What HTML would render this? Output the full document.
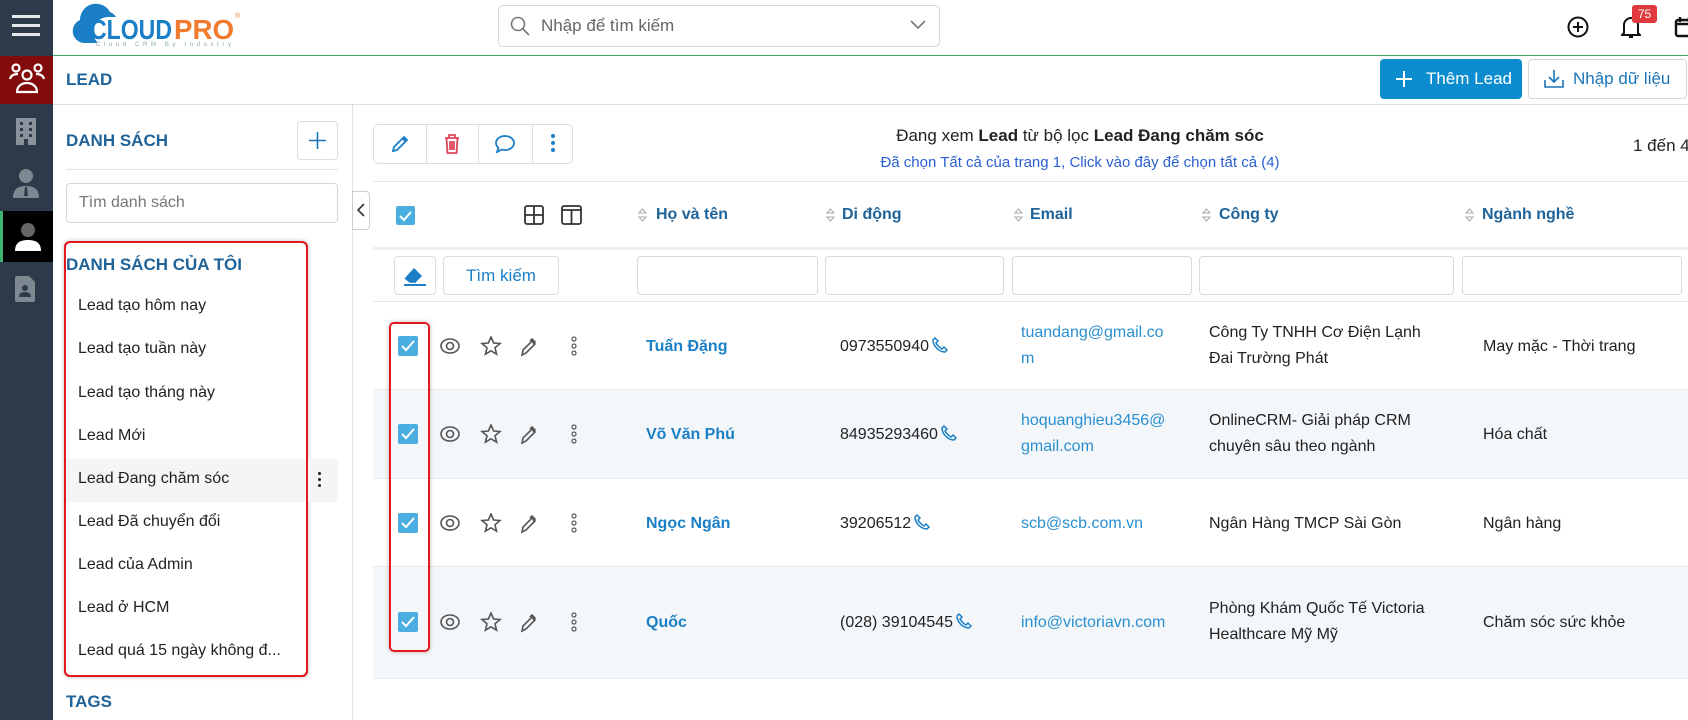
<!DOCTYPE html>
<html><head><meta charset="utf-8">
<style>
*{box-sizing:border-box;margin:0;padding:0}
body{width:1688px;height:720px;overflow:hidden;background:#fff;font-family:"Liberation Sans",Arial,sans-serif;position:relative;color:#222}
.a{position:absolute}
.side{left:0;top:0;width:53px;height:720px;background:#2c3a4a}
.item{position:absolute;left:78px;font-size:16px;color:#222}
.th{position:absolute;top:206px;font-size:16px;font-weight:bold;color:#1f6399}
.sort{position:absolute;top:207px;width:9px;height:16px}
.inp{position:absolute;top:256px;height:39px;border:1px solid #d9d9d9;border-radius:4px;background:#fff}
.cell{position:absolute;font-size:16px;line-height:26px}
.row{position:absolute;left:373px;width:1315px;border-bottom:1px solid #e8ecef}
.ph{display:inline-block;vertical-align:-2px;margin-left:3px}
</style></head><body>
<div class="a side"></div>
<div class="a" style="left:12px;top:15px;width:28px;height:3px;background:#e6e9ec;box-shadow:0 9px 0 #e6e9ec,0 18px 0 #e6e9ec"></div>
<div class="a" style="left:0;top:56px;width:53px;height:48px;background:#820b0b"></div>
<svg class="a" style="left:8px;top:62px" width="38" height="34" viewBox="0 0 38 34" fill="none" stroke="#fff" stroke-width="2.2"><circle cx="8" cy="6" r="3.5"/><circle cx="30" cy="6" r="3.5"/><circle cx="19" cy="13" r="4.5"/><path d="M2 17c1-4 4-5 8-5M36 17c-1-4-4-5-8-5M9 30c0-6 5-9 10-9s10 3 10 9z"/></svg>
<svg class="a" style="left:15px;top:117px" width="22" height="28" viewBox="0 0 22 28"><rect x="1" y="1" width="20" height="27" fill="#8a939c"/><g fill="#2c3a4a"><rect x="5" y="5" width="3" height="3"/><rect x="14" y="5" width="3" height="3"/><rect x="5" y="11" width="3" height="3"/><rect x="14" y="11" width="3" height="3"/><rect x="5" y="17" width="3" height="3"/><rect x="14" y="17" width="3" height="3"/><rect x="9" y="22" width="4" height="6"/></g></svg>
<svg class="a" style="left:13px;top:168px" width="26" height="30" viewBox="0 0 26 30"><circle cx="13" cy="8" r="7" fill="#7e8891"/><path d="M0 30c0-9 5-12 13-12s13 3 13 12z" fill="#7e8891"/><path d="M12 19h2l1 9h-4z" fill="#2c3a4a"/></svg>
<div class="a" style="left:0;top:211px;width:53px;height:51px;background:#000;border-left:3px solid #3cb371"></div>
<svg class="a" style="left:15px;top:222px" width="26" height="30" viewBox="0 0 26 30"><circle cx="13" cy="8" r="7" fill="#666"/><path d="M0 29c0-8 5-11 13-11s13 3 13 11z" fill="#fff"/></svg>
<svg class="a" style="left:15px;top:276px" width="20" height="26" viewBox="0 0 20 26"><path d="M0 2q0-2 2-2h12l6 6v18q0 2-2 2H2q-2 0-2-2z" fill="#7e8891"/><circle cx="10" cy="12" r="3" fill="#2c3a4a"/><path d="M4 21c0-4 3-5 6-5s6 1 6 5z" fill="#2c3a4a"/></svg>
<div class="a" style="left:53px;top:55px;width:1635px;height:1px;background:#3ca66a"></div>
<svg class="a" style="left:62px;top:3px" width="190" height="44" viewBox="0 0 190 44"><path d="M22 40a12 12 0 0 1-4-23a16 16 0 0 1 30-8a12 12 0 0 1 6 5h-8a15 15 0 0 0-10 26z" fill="#1a7fc6"/><text x="28" y="36" font-family="Liberation Sans" font-weight="bold" font-size="28" fill="#1a7fc6" textLength="82" lengthAdjust="spacingAndGlyphs">CLOUD</text><text x="112" y="36" font-family="Liberation Sans" font-weight="bold" font-size="28" fill="#f07a2e" textLength="60" lengthAdjust="spacingAndGlyphs">PRO</text><text x="173" y="15" font-family="Liberation Sans" font-size="7" fill="#f07a2e">®</text><text x="34" y="43" font-family="Liberation Sans" font-size="6" fill="#8aa" textLength="135" lengthAdjust="spacing">Cloud CRM By Industry</text></svg>
<div class="a" style="left:498px;top:5px;width:442px;height:42px;border:1px solid #d6d6d6;border-radius:5px"></div>
<svg class="a" style="left:510px;top:16px" width="20" height="20" viewBox="0 0 20 20" fill="none" stroke="#777" stroke-width="1.6"><circle cx="8" cy="8" r="6.5"/><path d="M13 13l6 6"/></svg>
<div class="a" style="left:541px;top:16px;font-size:17px;color:#666">Nhập để tìm kiếm</div>
<svg class="a" style="left:910px;top:20px" width="16" height="10" viewBox="0 0 16 10" fill="none" stroke="#777" stroke-width="1.6"><path d="M1 1l7 7 7-7"/></svg>
<svg class="a" style="left:1567px;top:16px" width="22" height="22" viewBox="0 0 22 22" fill="none" stroke="#111" stroke-width="2"><circle cx="11" cy="11" r="9.5"/><path d="M11 6v10M6 11h10"/></svg>
<svg class="a" style="left:1621px;top:15px" width="20" height="24" viewBox="0 0 20 24" fill="none" stroke="#111" stroke-width="2"><path d="M3 18V10a7 7 0 0 1 14 0v8l2 2H1z M8 22h4"/></svg>
<div class="a" style="left:1632px;top:5px;width:25px;height:18px;background:#e0393e;border-radius:3px;color:#fff;font-size:12px;text-align:center;line-height:18px">75</div>
<svg class="a" style="left:1674px;top:16px" width="20" height="22" viewBox="0 0 20 22" fill="none" stroke="#111" stroke-width="2.4"><rect x="2" y="4" width="18" height="16" rx="2"/><path d="M2 8h18M6 1v5M15 1v5"/></svg>
<div class="a" style="left:66px;top:70px;font-size:17px;font-weight:bold;color:#1f6399">LEAD</div>
<div class="a" style="left:53px;top:104px;width:1635px;height:1px;background:#ddd"></div>
<div class="a" style="left:1380px;top:59px;width:142px;height:40px;background:#0a8ccf;border-radius:4px;color:#fff;font-size:17px;line-height:40px;padding-left:46px">Thêm Lead</div>
<svg class="a" style="left:1396px;top:71px" width="16" height="16" viewBox="0 0 16 16" stroke="#fff" stroke-width="2"><path d="M8 0v16M0 8h16"/></svg>
<div class="a" style="left:1528px;top:59px;width:159px;height:40px;border:1px solid #d6d6d6;border-radius:4px;color:#1a75b8;font-size:17px;line-height:38px;padding-left:44px">Nhập dữ liệu</div>
<svg class="a" style="left:1544px;top:69px" width="20" height="19" viewBox="0 0 20 19" fill="none" stroke="#1a75b8" stroke-width="1.6"><path d="M10 1v11M5 8l5 5 5-5M1 11v7h18v-7"/></svg>
<div class="a" style="left:352px;top:105px;width:1px;height:615px;background:#e3e3e3"></div>
<div class="a" style="left:66px;top:131px;font-size:17px;font-weight:bold;color:#1f6399">DANH SÁCH</div>
<div class="a" style="left:297px;top:121px;width:41px;height:39px;border:1px solid #ddd;border-radius:4px"></div>
<svg class="a" style="left:309px;top:132px" width="17" height="17" viewBox="0 0 17 17" stroke="#1a75b8" stroke-width="1.6"><path d="M8.5 0v17M0 8.5h17"/></svg>
<div class="a" style="left:66px;top:169px;width:272px;height:1px;background:#e3e3e3"></div>
<div class="a" style="left:66px;top:183px;width:272px;height:40px;border:1px solid #d6d6d6;border-radius:4px;font-size:16px;color:#777;padding:10px 0 0 12px">Tìm danh sách</div>
<div class="a" style="left:64px;top:241px;width:244px;height:436px;border:2px solid #e3191f;border-radius:6px;box-shadow:0 0 5px rgba(0,0,0,.25)"></div>
<div class="a" style="left:66px;top:255px;font-size:17px;font-weight:bold;color:#1f6399">DANH SÁCH CỦA TÔI</div>
<div class="a" style="left:66px;top:459px;width:272px;height:43px;background:#f5f5f5"></div>
<div class="a" style="left:64px;top:241px;width:244px;height:436px;border:2px solid #e3191f;border-radius:6px"></div>
<div class="item" style="top:297px">Lead tạo hôm nay</div>
<div class="item" style="top:340px">Lead tạo tuần này</div>
<div class="item" style="top:384px">Lead tạo tháng này</div>
<div class="item" style="top:427px">Lead Mới</div>
<div class="item" style="top:470px">Lead Đang chăm sóc</div>
<div class="item" style="top:513px">Lead Đã chuyển đổi</div>
<div class="item" style="top:556px">Lead của Admin</div>
<div class="item" style="top:599px">Lead ở HCM</div>
<div class="item" style="top:642px">Lead quá 15 ngày không đ...</div>
<div class="a" style="left:318px;top:472px;width:3px;height:3px;background:#222;border-radius:50%;box-shadow:0 6px 0 #222,0 12px 0 #222"></div>
<div class="a" style="left:66px;top:692px;font-size:17px;font-weight:bold;color:#1f6399">TAGS</div>
<div class="a" style="left:352px;top:191px;width:18px;height:39px;border:1px solid #ccc;border-radius:0 4px 4px 0;background:#fff"></div>
<svg class="a" style="left:356px;top:203px" width="10" height="14" viewBox="0 0 10 14" fill="none" stroke="#333" stroke-width="1.6"><path d="M8 1L2 7l6 6"/></svg>
<div class="a" style="left:373px;top:124px;width:200px;height:40px;border:1px solid #ddd;border-radius:5px"></div>
<div class="a" style="left:426px;top:125px;width:1px;height:38px;background:#ddd"></div>
<div class="a" style="left:478px;top:125px;width:1px;height:38px;background:#ddd"></div>
<div class="a" style="left:532px;top:125px;width:1px;height:38px;background:#ddd"></div>
<svg class="a" style="left:391px;top:135px" width="18" height="18" viewBox="0 0 18 18" fill="none" stroke="#1a7fc6" stroke-width="1.8"><path d="M2 16l1-4 10-10 3 3-10 10z"/><path d="M12 3l3 3" stroke-width="3"/></svg>
<svg class="a" style="left:444px;top:134px" width="16" height="20" viewBox="0 0 16 20" fill="none" stroke="#e0455a" stroke-width="1.8"><path d="M1 4h14M5 4V1h6v3M2.5 4l1 15h9l1-15M6 7v9M8 7v9M10 7v9"/></svg>
<svg class="a" style="left:495px;top:135px" width="20" height="18" viewBox="0 0 20 18" fill="none" stroke="#1a7fc6" stroke-width="1.8"><path d="M10 1c5 0 9 3 9 7s-4 7-9 7c-1 0-2 0-3-.5L2 17l1.5-4C2 11.5 1 10 1 8c0-4 4-7 9-7z"/></svg>
<div class="a" style="left:551px;top:134px;width:4px;height:4px;border-radius:50%;background:#1a7fc6;box-shadow:0 7px 0 #1a7fc6,0 14px 0 #1a7fc6"></div>
<div class="a" style="left:700px;top:126px;width:760px;text-align:center;font-size:17px;color:#222">Đang xem <b>Lead</b> từ bộ lọc <b>Lead Đang chăm sóc</b></div>
<div class="a" style="left:700px;top:154px;width:760px;text-align:center;font-size:15px;color:#2a5fd0">Đã chọn Tất cả của trang 1, Click vào đây để chọn tất cả (4)</div>
<div class="a" style="left:1633px;top:136px;font-size:17px;color:#222;white-space:nowrap">1 đến 4</div>
<div class="a" style="left:373px;top:181px;width:1315px;height:1px;background:#e8e8e8"></div>
<svg class="a" style="left:396px;top:206px" width="19" height="19" viewBox="0 0 19 19"><rect width="19" height="19" rx="2" fill="#4aaee0"/><path d="M4 10l4 4 7-8" fill="none" stroke="#fff" stroke-width="2"/></svg>
<svg class="a" style="left:524px;top:205px" width="58" height="20" viewBox="0 0 58 20" fill="none" stroke="#333" stroke-width="1.8"><rect x="1" y="1" width="18" height="18" rx="2"/><path d="M10 1v18M1 10h18"/><rect x="38" y="1" width="19" height="18" rx="2"/><path d="M38 5h19M47.5 5v14"/></svg>
<svg class="sort" style="left:638px" viewBox="0 0 9 16" fill="none" stroke="#aaa"><path d="M1 6l3.5-4 3.5 4zM1 10l3.5 4 3.5-4z"/></svg><div class="th" style="left:656px">Họ và tên</div>
<svg class="sort" style="left:826px" viewBox="0 0 9 16" fill="none" stroke="#aaa"><path d="M1 6l3.5-4 3.5 4zM1 10l3.5 4 3.5-4z"/></svg><div class="th" style="left:842px">Di động</div>
<svg class="sort" style="left:1014px" viewBox="0 0 9 16" fill="none" stroke="#aaa"><path d="M1 6l3.5-4 3.5 4zM1 10l3.5 4 3.5-4z"/></svg><div class="th" style="left:1030px">Email</div>
<svg class="sort" style="left:1202px" viewBox="0 0 9 16" fill="none" stroke="#aaa"><path d="M1 6l3.5-4 3.5 4zM1 10l3.5 4 3.5-4z"/></svg><div class="th" style="left:1219px">Công ty</div>
<svg class="sort" style="left:1465px" viewBox="0 0 9 16" fill="none" stroke="#aaa"><path d="M1 6l3.5-4 3.5 4zM1 10l3.5 4 3.5-4z"/></svg><div class="th" style="left:1482px">Ngành nghề</div>
<div class="a" style="left:373px;top:247px;width:1315px;height:3px;background:#eceeef"></div>
<div class="a" style="left:394px;top:256px;width:42px;height:39px;border:1px solid #ddd;border-radius:4px"></div>
<svg class="a" style="left:402px;top:264px" width="26" height="22" viewBox="0 0 26 22"><path d="M3 14l9-10 8 8-6 6H8z" fill="#1a7fc6"/><path d="M3 14l5 4h6" fill="none" stroke="#1a7fc6" stroke-width="1.6"/><path d="M2 21h22" stroke="#1a7fc6" stroke-width="2"/></svg>
<div class="a" style="left:443px;top:256px;width:116px;height:39px;border:1px solid #ddd;border-radius:4px;text-align:center;line-height:37px;font-size:17px;color:#1a7fc6">Tìm kiếm</div>
<div class="inp" style="left:637px;width:181px"></div>
<div class="inp" style="left:825px;width:179px"></div>
<div class="inp" style="left:1012px;width:180px"></div>
<div class="inp" style="left:1199px;width:255px"></div>
<div class="inp" style="left:1462px;width:220px"></div>
<div class="a" style="left:373px;top:301px;width:1315px;height:1px;background:#e8e8e8"></div>
<div class="row" style="top:302px;height:88px;background:#fff"></div>
<div class="row" style="top:390px;height:89px;background:#f4f7fa"></div>
<div class="row" style="top:479px;height:88px;background:#fff"></div>
<div class="row" style="top:567px;height:112px;background:#f4f7fa"></div>
<svg class="a" style="left:398px;top:336px" width="230" height="22" viewBox="0 0 230 22"><rect x="0" y="0" width="20" height="20" rx="2" fill="#4aaee0"/><path d="M4 10l4 4 8-9" fill="none" stroke="#fff" stroke-width="2"/><g fill="none" stroke="#555" stroke-width="1.6"><ellipse cx="52" cy="10" rx="9" ry="7"/><circle cx="52" cy="10" r="3.5"/><path d="M93 1l2.6 6 6.4.5-5 4.3 1.6 6.4L93 14.8l-5.6 3.4 1.6-6.4-5-4.3 6.4-.5z"/><path d="M124 19l1-5 9-9 3 3-9 9z M132 5l2-2 3 3-2 2"/><circle cx="176" cy="3" r="2" stroke-width="1.2"/><circle cx="176" cy="10" r="2" stroke-width="1.2"/><circle cx="176" cy="17" r="2" stroke-width="1.2"/></g></svg>
<svg class="a" style="left:398px;top:424px" width="230" height="22" viewBox="0 0 230 22"><rect x="0" y="0" width="20" height="20" rx="2" fill="#4aaee0"/><path d="M4 10l4 4 8-9" fill="none" stroke="#fff" stroke-width="2"/><g fill="none" stroke="#555" stroke-width="1.6"><ellipse cx="52" cy="10" rx="9" ry="7"/><circle cx="52" cy="10" r="3.5"/><path d="M93 1l2.6 6 6.4.5-5 4.3 1.6 6.4L93 14.8l-5.6 3.4 1.6-6.4-5-4.3 6.4-.5z"/><path d="M124 19l1-5 9-9 3 3-9 9z M132 5l2-2 3 3-2 2"/><circle cx="176" cy="3" r="2" stroke-width="1.2"/><circle cx="176" cy="10" r="2" stroke-width="1.2"/><circle cx="176" cy="17" r="2" stroke-width="1.2"/></g></svg>
<svg class="a" style="left:398px;top:513px" width="230" height="22" viewBox="0 0 230 22"><rect x="0" y="0" width="20" height="20" rx="2" fill="#4aaee0"/><path d="M4 10l4 4 8-9" fill="none" stroke="#fff" stroke-width="2"/><g fill="none" stroke="#555" stroke-width="1.6"><ellipse cx="52" cy="10" rx="9" ry="7"/><circle cx="52" cy="10" r="3.5"/><path d="M93 1l2.6 6 6.4.5-5 4.3 1.6 6.4L93 14.8l-5.6 3.4 1.6-6.4-5-4.3 6.4-.5z"/><path d="M124 19l1-5 9-9 3 3-9 9z M132 5l2-2 3 3-2 2"/><circle cx="176" cy="3" r="2" stroke-width="1.2"/><circle cx="176" cy="10" r="2" stroke-width="1.2"/><circle cx="176" cy="17" r="2" stroke-width="1.2"/></g></svg>
<svg class="a" style="left:398px;top:612px" width="230" height="22" viewBox="0 0 230 22"><rect x="0" y="0" width="20" height="20" rx="2" fill="#4aaee0"/><path d="M4 10l4 4 8-9" fill="none" stroke="#fff" stroke-width="2"/><g fill="none" stroke="#555" stroke-width="1.6"><ellipse cx="52" cy="10" rx="9" ry="7"/><circle cx="52" cy="10" r="3.5"/><path d="M93 1l2.6 6 6.4.5-5 4.3 1.6 6.4L93 14.8l-5.6 3.4 1.6-6.4-5-4.3 6.4-.5z"/><path d="M124 19l1-5 9-9 3 3-9 9z M132 5l2-2 3 3-2 2"/><circle cx="176" cy="3" r="2" stroke-width="1.2"/><circle cx="176" cy="10" r="2" stroke-width="1.2"/><circle cx="176" cy="17" r="2" stroke-width="1.2"/></g></svg>
<div class="a" style="left:389px;top:322px;width:41px;height:330px;border:2px solid #e3191f;border-radius:5px;box-shadow:0 0 5px rgba(0,0,0,.25)"></div>
<div class="cell" style="left:646px;top:334px;font-weight:bold;color:#1a7fc6">Tuấn Đặng</div>
<div class="cell" style="left:840px;top:334px">0973550940<svg class="ph" width="16" height="16" viewBox="0 0 16 16" fill="none" stroke="#1a7fc6" stroke-width="1.5"><path d="M3 1l3 3-2 2c1 2 4 5 6 6l2-2 3 3-2 2C7 15 1 9 1 3z"/></svg></div>
<div class="cell" style="left:1021px;top:320px;color:#2a8fd0;width:146px;word-break:break-all">tuandang@gmail.com</div>
<div class="cell" style="left:1209px;top:320px;width:226px">Công Ty TNHH Cơ Điện Lạnh Đai Trường Phát</div>
<div class="cell" style="left:1483px;top:334px">May mặc - Thời trang</div>
<div class="cell" style="left:646px;top:422px;font-weight:bold;color:#1a7fc6">Võ Văn Phú</div>
<div class="cell" style="left:840px;top:422px">84935293460<svg class="ph" width="16" height="16" viewBox="0 0 16 16" fill="none" stroke="#1a7fc6" stroke-width="1.5"><path d="M3 1l3 3-2 2c1 2 4 5 6 6l2-2 3 3-2 2C7 15 1 9 1 3z"/></svg></div>
<div class="cell" style="left:1021px;top:408px;color:#2a8fd0;width:175px">hoquanghieu3456@ gmail.com</div>
<div class="cell" style="left:1209px;top:408px;width:226px">OnlineCRM- Giải pháp CRM chuyên sâu theo ngành</div>
<div class="cell" style="left:1483px;top:422px">Hóa chất</div>
<div class="cell" style="left:646px;top:511px;font-weight:bold;color:#1a7fc6">Ngọc Ngân</div>
<div class="cell" style="left:840px;top:511px">39206512<svg class="ph" width="16" height="16" viewBox="0 0 16 16" fill="none" stroke="#1a7fc6" stroke-width="1.5"><path d="M3 1l3 3-2 2c1 2 4 5 6 6l2-2 3 3-2 2C7 15 1 9 1 3z"/></svg></div>
<div class="cell" style="left:1021px;top:511px;color:#2a8fd0">scb@scb.com.vn</div>
<div class="cell" style="left:1209px;top:511px">Ngân Hàng TMCP Sài Gòn</div>
<div class="cell" style="left:1483px;top:511px">Ngân hàng</div>
<div class="cell" style="left:646px;top:610px;font-weight:bold;color:#1a7fc6">Quốc</div>
<div class="cell" style="left:840px;top:610px">(028) 39104545<svg class="ph" width="16" height="16" viewBox="0 0 16 16" fill="none" stroke="#1a7fc6" stroke-width="1.5"><path d="M3 1l3 3-2 2c1 2 4 5 6 6l2-2 3 3-2 2C7 15 1 9 1 3z"/></svg></div>
<div class="cell" style="left:1021px;top:610px;color:#2a8fd0">info@victoriavn.com</div>
<div class="cell" style="left:1209px;top:596px;width:250px">Phòng Khám Quốc Tế Victoria Healthcare Mỹ Mỹ</div>
<div class="cell" style="left:1483px;top:610px">Chăm sóc sức khỏe</div>
</body></html>
